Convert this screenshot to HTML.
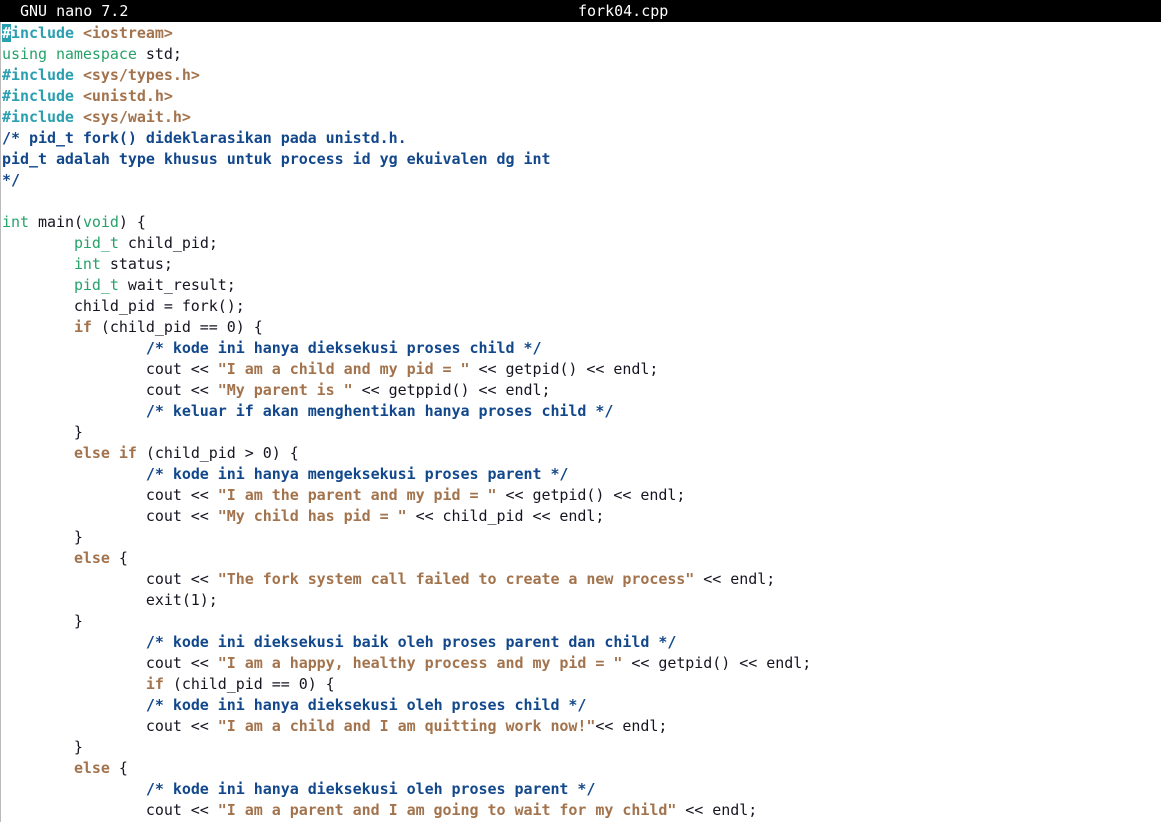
<!DOCTYPE html>
<html><head><meta charset="utf-8"><style>
body{margin:0;width:1161px;height:822px;overflow:hidden;background:#fff;font-family:"DejaVu Sans Mono","Liberation Mono",monospace;font-size:15px;}
#t{position:absolute;top:0;left:0;width:1161px;height:22px;background:#000;color:#fff;}
#t span{position:absolute;top:1px;line-height:21px;white-space:pre}
pre{position:absolute;top:23px;left:2px;margin:0;font:inherit;line-height:21px;color:#171421;letter-spacing:-0.04px}
#bar{position:absolute;left:0;top:22px;width:1px;height:800px;background:#bbb}
.p{color:#2a9fb0;font-weight:bold}.s{color:#a2734c;font-weight:bold}.g{color:#26a269}.c{color:#12488b;font-weight:bold}.k{color:#a2734c;font-weight:bold}
.cur{background:#2a9fb0;color:#fff}
</style></head><body>
<div id="t"><span style="left:20px">GNU nano 7.2</span><span style="left:578px">fork04.cpp</span></div>
<div id="bar"></div>
<pre><span class="p"><span class="cur">#</span>include</span> <span class="s">&lt;iostream&gt;</span>
<span class="g">using namespace</span> std;
<span class="p">#include</span> <span class="s">&lt;sys/types.h&gt;</span>
<span class="p">#include</span> <span class="s">&lt;unistd.h&gt;</span>
<span class="p">#include</span> <span class="s">&lt;sys/wait.h&gt;</span>
<span class="c">/* pid_t fork() dideklarasikan pada unistd.h.
pid_t adalah type khusus untuk process id yg ekuivalen dg int
*/</span>

<span class="g">int</span> main(<span class="g">void</span>) {
        <span class="g">pid_t</span> child_pid;
        <span class="g">int</span> status;
        <span class="g">pid_t</span> wait_result;
        child_pid = fork();
        <span class="k">if</span> (child_pid == 0) {
                <span class="c">/* kode ini hanya dieksekusi proses child */</span>
                cout &lt;&lt; <span class="s">"I am a child and my pid = "</span> &lt;&lt; getpid() &lt;&lt; endl;
                cout &lt;&lt; <span class="s">"My parent is "</span> &lt;&lt; getppid() &lt;&lt; endl;
                <span class="c">/* keluar if akan menghentikan hanya proses child */</span>
        }
        <span class="k">else if</span> (child_pid &gt; 0) {
                <span class="c">/* kode ini hanya mengeksekusi proses parent */</span>
                cout &lt;&lt; <span class="s">"I am the parent and my pid = "</span> &lt;&lt; getpid() &lt;&lt; endl;
                cout &lt;&lt; <span class="s">"My child has pid = "</span> &lt;&lt; child_pid &lt;&lt; endl;
        }
        <span class="k">else</span> {
                cout &lt;&lt; <span class="s">"The fork system call failed to create a new process"</span> &lt;&lt; endl;
                exit(1);
        }
                <span class="c">/* kode ini dieksekusi baik oleh proses parent dan child */</span>
                cout &lt;&lt; <span class="s">"I am a happy, healthy process and my pid = "</span> &lt;&lt; getpid() &lt;&lt; endl;
                <span class="k">if</span> (child_pid == 0) {
                <span class="c">/* kode ini hanya dieksekusi oleh proses child */</span>
                cout &lt;&lt; <span class="s">"I am a child and I am quitting work now!"</span>&lt;&lt; endl;
        }
        <span class="k">else</span> {
                <span class="c">/* kode ini hanya dieksekusi oleh proses parent */</span>
                cout &lt;&lt; <span class="s">"I am a parent and I am going to wait for my child"</span> &lt;&lt; endl;
</pre>
</body></html>
